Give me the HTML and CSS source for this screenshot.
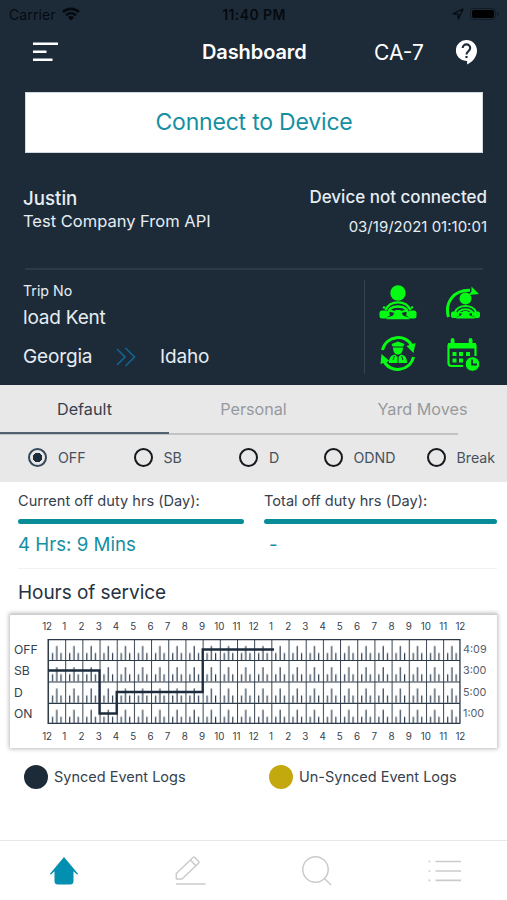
FILE: index.html
```html
<!DOCTYPE html>
<html lang="en">
<head>
<meta charset="utf-8">
<meta name="viewport" content="width=device-width, initial-scale=1">
<title>Dashboard</title>
<link rel="stylesheet" href="styles.css">
</head>
<body>
<header class="hero">
  <div class="status">
    <div class="carrier"><span>Carrier</span>
      <svg width="18" height="14" viewBox="0 0 18 14"><g fill="none" stroke="#050a0f" stroke-width="2.6"><path d="M1 5.2C5.5.7 12.5.7 17 5.2"/><path d="M4 8.4c2.8-2.8 7.2-2.8 10 0"/></g><path d="M5.800 10.300c1.800-1.700 4.600-1.700 6.400 0L9 13.600z" fill="#050a0f"/></svg>
    </div>
    <div class="clock">11:40 PM</div>
    <div class="power">
      <svg width="12" height="12" viewBox="0 0 12 12" fill="none" stroke="#050a0f" stroke-width="1.3" stroke-linejoin="round"><path d="M1 5.8 11 1 6.4 11 6 6.2z"/></svg>
      <svg width="29" height="12" viewBox="0 0 29 12"><rect x=".5" y=".5" width="25" height="11" rx="3.5" fill="none" stroke="#111b25"/><rect x="2" y="2" width="22" height="8" rx="2" fill="#000"/><path d="M27 4v4q1.500-.5 1.500-2T27 4" fill="#111b25"/></svg>
    </div>
  </div>
  <nav class="topbar">
    <svg width="26" height="20" viewBox="0 0 26 20" stroke="#fff" stroke-width="2.500"><path d="M0 1.700h25M0 9.700h13.500M0 17.700h19.500"/></svg>
    <h1 class="title">Dashboard</h1>
    <span class="unit">CA-7</span>
    <svg width="22" height="25" viewBox="0 0 22 25"><path d="M10.500 0a10.500 10.500 0 0 0-.3 21h.9v3.500C17 21.800 21 16.500 21 10.500 21 4.700 16.300 0 10.500 0z" fill="#fff"/><path d="M6.700 8.100a3.700 3.700 0 0 1 7.500 0c0 3-3.700 3.200-3.700 6.300" fill="none" stroke="#1d2b39" stroke-width="2.100"/><path d="M9.400 16h2.200v2.100H9.400z" fill="#1d2b39"/></svg>
  </nav>
  <button class="connect"><span>Connect to Device</span></button>
  <section class="profile">
    <div class="who"><b class="name">Justin</b><span class="company">Test Company From API</span></div>
    <div class="device"><b class="state">Device not connected</b><time class="stamp">03/19/2021 01:10:01</time></div>
  </section>
  <section class="trip">
    <div class="route">
      <span class="caption">Trip No</span>
      <span class="load">load Kent</span>
      <div class="places"><span class="from">Georgia</span>
        <svg width="20" height="20" viewBox="0 0 20 20" fill="none" stroke="#126390" stroke-width="1.700"><path d="m1 2 8 8-8 8M9.500 1l9 9-9 9"/></svg>
        <span class="to">Idaho</span></div>
    </div>
    <div class="actions">
      <svg width="38" height="36" viewBox="0 0 38 36">
        <g fill="#06fb14"><circle cx="19" cy="8" r="7.700"/><rect x=".5" y="25.500" width="8.500" height="8" rx="2.500"/><rect x="29" y="25.500" width="8.500" height="8" rx="2.500"/><path d="M9 32.300 14 30.500 16.500 25h5l2.500 5.500 5 1.800 2 2H7z"/><circle cx="5" cy="22.500" r="1.300"/><circle cx="33" cy="22.500" r="1.300"/></g>
        <g fill="none" stroke="#06fb14" stroke-width="2.300"><path d="M6.500 25C9 19.500 13 17.300 19 17.300S29 19.500 31.500 25"/><path d="M10 31C7.500 25.500 12 21.500 19 21.500S30.500 25.500 28 31M10 25.500l6 1.500M28 25.500 22 27"/></g>
      </svg>
      <svg width="36" height="34" viewBox="0 0 36 34">
        <path d="M3.500 31C-.5 17 8 4 25 4.300" fill="none" stroke="#06fb14" stroke-width="3"/>
        <g fill="#06fb14"><path d="m26.500.5 7.500 7.500-10.500 1 3-3.500z"/><circle cx="20.500" cy="12.500" r="6"/><rect x="6" y="25.500" width="6.500" height="6.500" rx="2"/><rect x="28.500" y="25.500" width="6.500" height="6.500" rx="2"/><path d="m12 31 4-1.500 2.500-4.500h4l2.500 4.500 4 1.500 1 1.500H11z"/></g>
        <g fill="none" stroke="#06fb14" stroke-width="1.900"><path d="M10 26c2-4.500 5-6 10.500-6S29 21.500 31 26"/><path d="M13.500 30c-2-4 2-6.800 7-6.800s9 2.800 7 6.800M13.500 26l5 1M27.500 26l-5 1"/></g>
      </svg>
      <svg width="36" height="35" viewBox="0 0 36 35"><g fill="none" stroke="#06fb14" stroke-width="3"><path d="M2.500 14C6-.5 26-3 32 10"/><path d="M33.500 21C30 35.500 10 38 4 25"/></g><g fill="#06fb14"><path d="m35.500 7-2 10-7-7zM.5 28l1-10 8 7z"/><path d="m18 5.500 6.500 2.500-1.500 3c0 5-2 7.500-5 7.500s-5-2.500-5-7.500L11.500 8z"/><path d="M9 27c0-5 1.500-7.500 6-8.500l3 3 3-3c4.500 1 6 3.500 6 8.500z"/></g><path d="M13 11h10M18 21v6M14.500 20l-1.500 4M21.500 20l1.500 4" stroke="#1d2b39" stroke-width="1"/></svg>
      <svg class="calendar" width="34" height="34" viewBox="0 0 34 34"><g fill="none" stroke="#06fb14" stroke-width="2.200"><path d="M29.500 18V7.500h-27V25q0 3 3 3H17"/></g><g fill="#06fb14"><path d="M2 5h28v5.500H2z"/><rect x="4.700" y="0" width="3.800" height="7" rx="1.900"/><rect x="22.700" y="0" width="3.800" height="7" rx="1.900"/><path d="M6.500 14h4v4h-4zM13 14h4v4h-4zM20 14h4v4h-4zM6.500 20.500h4v4h-4zM13 20.500h4v4h-4z"/><circle cx="26.500" cy="26" r="7.300" stroke="#1d2b39"/></g><path d="M26 21.500v5h5" fill="none" stroke="#1d2b39" stroke-width="1.800"/></svg>
    </div>
  </section>
</header>

<section class="modes">
  <div class="tabs"><span class="tab tab-on">Default</span><span class="tab">Personal</span><span class="tab">Yard Moves</span></div>
  <div class="radios">
    <label class="opt"><i class="dot dot-on"></i>OFF</label>
    <label class="opt"><i class="dot"></i>SB</label>
    <label class="opt"><i class="dot"></i>D</label>
    <label class="opt"><i class="dot"></i>ODND</label>
    <label class="opt"><i class="dot"></i>Break</label>
  </div>
</section>

<section class="totals">
  <div class="total"><span class="total-label">Current off duty hrs (Day):</span><i class="bar"></i><span class="value">4 Hrs: 9 Mins</span></div>
  <div class="total"><span class="total-label">Total off duty hrs (Day):</span><i class="bar"></i><span class="value none">-</span></div>
</section>

<h2 class="heading">Hours of service</h2>
<section class="chart">
  <div class="hours"><span>12</span><span>1</span><span>2</span><span>3</span><span>4</span><span>5</span><span>6</span><span>7</span><span>8</span><span>9</span><span>10</span><span>11</span><span>12</span><span>1</span><span>2</span><span>3</span><span>4</span><span>5</span><span>6</span><span>7</span><span>8</span><span>9</span><span>10</span><span>11</span><span>12</span></div>
  <div class="plot">
    <div class="rows"><span>OFF</span><span>SB</span><span>D</span><span>ON</span></div>
    <svg width="414" height="86" viewBox="-1 0 414 86">
      <defs><pattern id="cell" width="17.180" height="21.250" patternUnits="userSpaceOnUse"><path d="M4.500 14v7.250M8.800 7v14.250M13 14v7.250" stroke="#2d3c4d" stroke-width="1.200"/><path d="M0 0v21.250" stroke="#35424f" stroke-width="2"/></pattern></defs>
      <rect width="412.300" height="84.500" fill="url(#cell)"/>
      <path d="M0 .6h412.300M0 21.500h412.300M0 43h412.300M0 64.300h412.300M0 84.400h412.300M.1 0v85M411.900 0v85" stroke="#2b3947" stroke-width="1.200"/>
      <path d="M0 31.500H51.500V74.500H68.700V53H154.700V10.500H226" fill="none" stroke="#1d2c3c" stroke-width="2.300"/>
    </svg>
    <div class="rows sums"><span>4:09</span><span>3:00</span><span>5:00</span><span>1:00</span></div>
  </div>
  <div class="hours"><span>12</span><span>1</span><span>2</span><span>3</span><span>4</span><span>5</span><span>6</span><span>7</span><span>8</span><span>9</span><span>10</span><span>11</span><span>12</span><span>1</span><span>2</span><span>3</span><span>4</span><span>5</span><span>6</span><span>7</span><span>8</span><span>9</span><span>10</span><span>11</span><span>12</span></div>
</section>
<section class="legend">
  <div class="key"><i class="blob"></i>Synced Event Logs</div>
  <div class="key"><i class="blob gold"></i>Un-Synced Event Logs</div>
</section>

<footer class="tabbar">
  <svg width="30" height="30" viewBox="0 0 30 30"><path d="m.8 18 14.200-17L29.200 18l-1.200.5-3.500-3.300V25q0 3.500-3.500 3.500H9q-3.500 0-3.500-3.500v-9.800L2 18.500z" fill="#038fb0"/></svg>
  <svg width="31" height="30" viewBox="0 0 31 30" fill="none" stroke="#cbcbcb" stroke-width="1.500"><path d="M1 28h29.500M1.300 22v-4.500L18 1.500q1-1 2 0l3.500 3.800q1 1 0 2L7 23H2q-.7 0-.7-1zM15.500 4l5.500 6"/></svg>
  <svg width="30" height="30" viewBox="0 0 30 30" fill="none" stroke="#cbcbcb" stroke-width="1.500"><circle cx="13.500" cy="13.500" r="12.700"/><path d="m22.500 22.500 6.500 6.500"/></svg>
  <svg width="33" height="22" viewBox="0 0 33 22" stroke="#cbcbcb" stroke-width="1.700"><path d="M7.500 1.500H33M7.500 11H33M7.500 20.300H33M.5 1.500h1.700M.5 11h1.700M.5 20.300h1.700"/></svg>
</footer>
</body>
</html>
```

FILE: styles.css
```css
* { box-sizing: border-box; }
body { margin: 0; width: 507px; height: 900px; overflow: hidden; background: #fff; color: #35414e; font-family: Inter, "Liberation Sans", sans-serif; display: flex; flex-direction: column; }
svg { display: block; flex: none; }
span, b, time, h1, h2 { white-space: nowrap; }
h1, h2 { margin: 0; }

.hero { height: 385px; background: #1d2b39; color: #e6edf3; }
.status { height: 28px; padding: 0 8px 0 9px; display: grid; grid-template-columns: 1fr auto 1fr; align-items: center; color: #050a0f; }
.carrier { display: flex; align-items: center; gap: 6px; font-size: 14px; letter-spacing: .1px; }
.clock { font-size: 14px; font-weight: 600; letter-spacing: .4px; }
.power { display: flex; justify-content: flex-end; align-items: center; gap: 6px; }

.topbar { height: 64px; padding: 0 28px 16px 33px; display: flex; align-items: center; color: #fff; }
.title { width: 106px; margin-left: 143px; font-size: 20px; font-weight: 600; letter-spacing: -.1px; }
.unit { width: 52px; margin: 0 30px 0 66px; font-size: 21px; }
.connect { display: flex; align-items: center; justify-content: center; width: 458px; height: 61px; margin: 0 0 0 25px; padding: 0 0 2px; border: 1px solid #cfd9df; background: #fff; color: #168fa3; font: 23px Inter, sans-serif; letter-spacing: -.2px; }

.profile { height: 117px; margin: 0 24px 0 25px; border-bottom: 2px solid #2c3a48; display: flex; justify-content: space-between; padding-top: 34px; }
.who { display: flex; flex-direction: column; margin-left: -2px; }
.name { font-size: 18.700px; line-height: 24px; font-weight: 500; }
.company { font-size: 16.500px; line-height: 21px; }
.device { display: flex; flex-direction: column; align-items: flex-end; margin-right: -4px; }
.state { font-size: 17px; line-height: 20px; font-weight: 500; }
.stamp { margin-top: 9px; font-size: 15px; line-height: 22px; }

.trip { height: 115px; display: flex; padding: 10px 0 0 23px; }
.route { width: 342px; height: 94px; border-right: 1px solid #354350; display: flex; flex-direction: column; }
.caption { font-size: 14.200px; line-height: 22px; }
.load { font-size: 19px; letter-spacing: -.2px; line-height: 32px; }
.places { display: flex; align-items: center; margin-top: 11px; font-size: 19px; letter-spacing: -.15px; line-height: 24px; }
.from { width: 93px; }
.to { margin-left: 24px; }
.actions { display: grid; grid-template-columns: 38px 36px; grid-template-rows: 36px 35px; column-gap: 28px; row-gap: 15px; margin: 5px 0 0 14px; align-items: center; justify-items: center; }
.calendar { margin-top: 3px; }

.modes { height: 97px; background: #e8e8e8; }
.tabs { height: 50px; display: grid; grid-template-columns: repeat(3, 169px); background: linear-gradient(#c1c3c5, #c1c3c5) 0 48px / 458px 2px no-repeat; }
.tab { text-align: center; line-height: 48px; height: 49px; font-size: 16.200px; color: #969a9e; }
.tab-on { color: #35414e; border-bottom: 2px solid #536270; }
.radios { height: 46px; padding-left: 28px; display: grid; grid-template-columns: 105.500px 105.500px 84.500px 103px auto; align-items: center; }
.opt { display: flex; align-items: center; gap: 11px; font-size: 14.200px; color: #46515d; margin-top: -1px; }
.dot { width: 19px; height: 19px; border: 2px solid #15191d; border-radius: 50%; }
.dot-on { border-color: #35475a; background: radial-gradient(circle, #1b2b3a 4.500px, transparent 5px); }

.totals { height: 87px; margin: 0 10px 0 18px; display: grid; grid-template-columns: 226px 233px; column-gap: 20px; border-bottom: 1px solid #f2f2f2; }
.total { display: flex; flex-direction: column; }
.total-label { height: 37px; line-height: 38px; font-size: 14.600px; }
.bar { height: 5px; border-radius: 3px; background: #078c98; }
.value { margin-top: 8px; line-height: 26px; font-size: 18.700px; color: #168fa3; }
.none { margin-left: 5px; }
.heading { height: 45px; padding-left: 18px; line-height: 48px; font-size: 19px; letter-spacing: -.05px; font-weight: 400; color: #26323f; }

.chart { width: 487px; height: 134px; margin-left: 10px; border-top: 1px solid #ccc; box-shadow: 0 0 4px 1px #bbb; display: flex; flex-direction: column; background: #fff; }
.hours { width: 430px; margin-left: 28.500px; display: grid; grid-template-columns: repeat(25, 17.220px); justify-items: center; height: 24px; line-height: 24px; font-size: 9.800px; color: #35414e; }
.plot { display: flex; height: 86px; }
.rows { width: 37px; padding-left: 4px; display: grid; grid-template-rows: repeat(4, 21.300px); line-height: 22px; font-size: 12.200px; flex: none; }
.sums { width: 34px; padding-left: 2px; font-size: 10.800px; color: #56606b; }

.legend { height: 57px; padding-left: 24px; display: grid; grid-template-columns: 245px auto; align-items: center; font-size: 14.500px; }
.key { display: flex; align-items: center; gap: 6px; }
.blob { width: 24px; height: 24px; border-radius: 50%; background: #1d2b39; }
.gold { background: #c3a80e; }

.tabbar { height: 60px; margin-top: auto; border-top: 1px solid #e8e8e8; padding: 0 46px 0 49px; display: flex; align-items: center; justify-content: space-between; }
```
